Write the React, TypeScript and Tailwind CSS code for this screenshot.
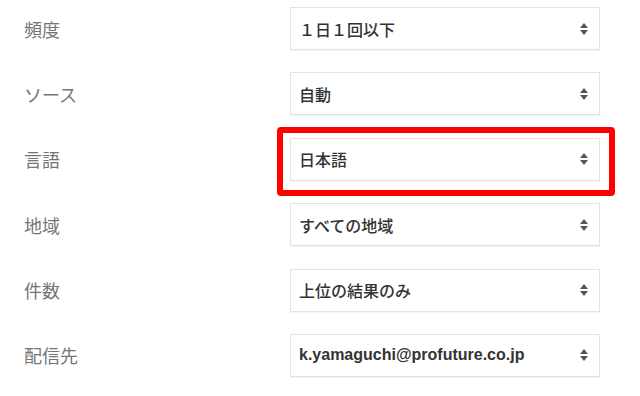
const rows = [
  { label: '頻度', value: '１日１回以下' },
  { label: 'ソース', value: '自動' },
  { label: '言語', value: '日本語', highlight: true },
  { label: '地域', value: 'すべての地域' },
  { label: '件数', value: '上位の結果のみ' },
  { label: '配信先', value: 'k.yamaguchi@profuture.co.jp', latin: true },
];

function SortArrows() {
  return (
    <svg width="10" height="14" viewBox="0 0 10 14" className="shrink-0">
      <path d="M5 1 L9 6 L1 6 Z" fill="#555" />
      <path d="M5 13 L9 8 L1 8 Z" fill="#555" />
    </svg>
  );
}

export default function App() {
  return (
    <div
      className="h-[396px] w-[640px] bg-white pl-6 pt-[7px]"
      style={{ fontFamily: '"Noto Sans CJK JP", Roboto, "Liberation Sans", sans-serif' }}
    >
      <div className="flex flex-col gap-[22.4px]">
        {rows.map((r) => (
          <div key={r.label} className="flex items-center">
            <div className="w-[266px] text-[18px] leading-none text-[#757575]">{r.label}</div>
            <div className="relative">
              {r.highlight && (
                <div className="pointer-events-none absolute -top-[11px] -bottom-[15px] -left-[13px] -right-[15px] rounded-[4px] border-[6px] border-[#f00]" />
              )}
              <div className="flex h-[43px] w-[310px] items-center justify-between border border-[#e2e2e2] bg-white pl-[8px] pr-[10px] shadow-[0_1px_1px_rgba(0,0,0,0.04)]">
                {r.latin ? (
                  <span
                    className="text-[16px] font-bold leading-none text-[#333]"
                    style={{ fontFamily: '"Liberation Sans", Arial, sans-serif' }}
                  >
                    {r.value}
                  </span>
                ) : (
                  <span className="text-[16px] font-medium leading-none text-[#333]">{r.value}</span>
                )}
                <SortArrows />
              </div>
            </div>
          </div>
        ))}
      </div>
    </div>
  );
}
